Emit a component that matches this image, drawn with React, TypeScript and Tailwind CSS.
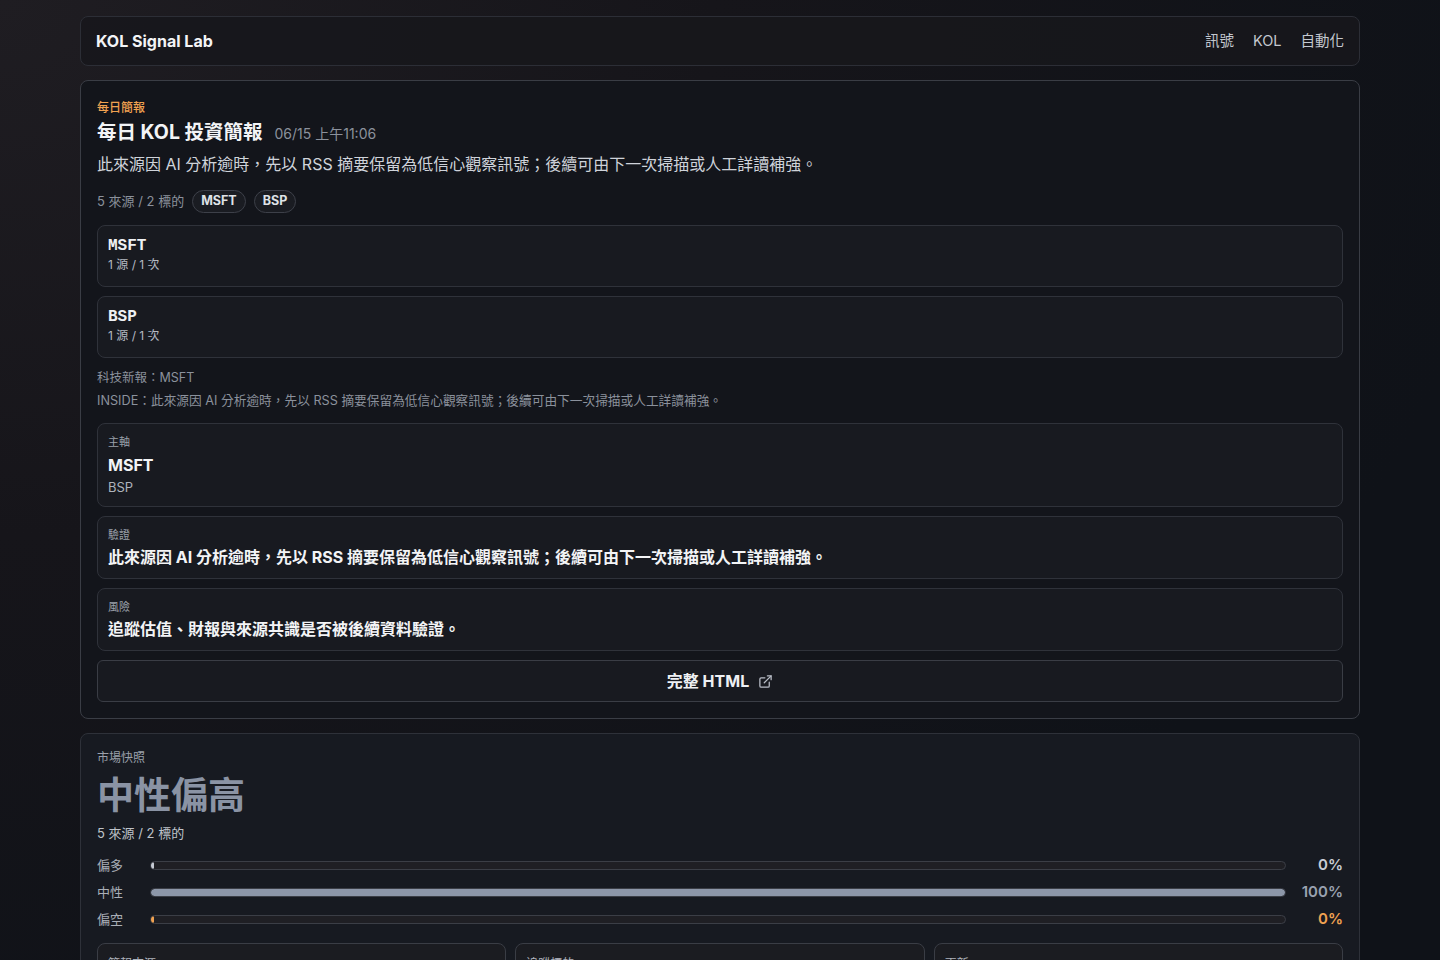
import { ExternalLink } from "lucide-react";

const sans = "font-['Inter','Noto_Sans_CJK_TC',sans-serif]";

type Ticker = { symbol: string; sources: number; mentions: number };
type Bias = { label: string; pct: number; fill: string; text: string };

const tickers: Ticker[] = [
  { symbol: "MSFT", sources: 1, mentions: 1 },
  { symbol: "BSP", sources: 1, mentions: 1 },
];

const biases: Bias[] = [
  { label: "偏多", pct: 0, fill: "bg-[#c5cad3]", text: "text-[#c9cdd5]" },
  { label: "中性", pct: 100, fill: "bg-[#8d97a9]", text: "text-[#9aa2b0]" },
  { label: "偏空", pct: 0, fill: "bg-[#f0a251]", text: "text-[#f0a251]" },
];

const summary =
  "此來源因 AI 分析逾時，先以 RSS 摘要保留為低信心觀察訊號；後續可由下一次掃描或人工詳讀補強。";

function Header() {
  return (
    <header className="flex h-[50px] items-center justify-between rounded-lg border border-[#2c2e36] bg-[#17171c]/90 px-[15px]">
      <span className="text-[16px] font-bold text-[#f3f4f6]">KOL Signal Lab</span>
      <nav className="flex items-center gap-[19px] text-[14.5px] text-[#c4c8cf]">
        <a>訊號</a>
        <a>KOL</a>
        <a>自動化</a>
      </nav>
    </header>
  );
}

function TickerCard({ t }: { t: Ticker }) {
  return (
    <div className="h-[62px] rounded-lg border border-[#2f323a] bg-[#181a20] px-[10px] pt-[10px]">
      <div className="font-['Liberation_Mono',monospace] text-[16px] font-bold leading-[20px] text-[#eef0f3]">
        {t.symbol}
      </div>
      <div className="mt-[1px] text-[12px] leading-[16px] text-[#b4b9c2]">
        {t.sources} 源 / {t.mentions} 次
      </div>
    </div>
  );
}

function Section({ label, children }: { label: string; children: React.ReactNode }) {
  return (
    <div className="rounded-lg border border-[#2f323a] bg-[#181a20] px-[10px] pb-[10px] pt-[11px]">
      <div className="text-[11px] leading-[14px] text-[#9aa0aa]">{label}</div>
      {children}
    </div>
  );
}

function BriefCard() {
  return (
    <section className="mt-[14px] rounded-lg border border-[#3a3d45] bg-[#13151b] px-[16px] pb-[16px] pt-[19px]">
      <div className="text-[12px] font-medium leading-[16px] text-[#f0a251]">每日簡報</div>
      <div className="mt-[3px] flex items-baseline gap-[12px]">
        <h1 className="text-[19.5px] font-bold leading-[26px] text-[#f3f4f6]">每日 KOL 投資簡報</h1>
        <span className="text-[14px] text-[#8b919c]">06/15 上午11:06</span>
      </div>
      <p className="mt-[7px] text-[16px] leading-[24px] text-[#cfd3da]">{summary}</p>
      <div className="mt-[14px] flex items-center gap-[8px]">
        <span className="text-[13px] text-[#8b919c]">5 來源 / 2 標的</span>
        {tickers.map((t) => (
          <span
            key={t.symbol}
            className="flex h-[23px] items-center rounded-full border border-[#3d4049] bg-[#1a1c22] px-[8px] text-[12.5px] font-bold text-[#dfe2e7]"
          >
            {t.symbol}
          </span>
        ))}
      </div>

      <div className="mt-[12px] flex flex-col gap-[9px]">
        {tickers.map((t) => (
          <TickerCard key={t.symbol} t={t} />
        ))}
      </div>

      <div className="mt-[12px] text-[12.5px] leading-[16px] text-[#8b919c]">科技新報：MSFT</div>
      <div className="mt-[7px] text-[12.7px] leading-[16px] text-[#8b919c]">INSIDE：{summary}</div>

      <div className="mt-[14px] flex flex-col gap-[9px]">
        <Section label="主軸">
          <div className="mt-[5px] text-[16px] font-bold leading-[22px] text-[#f3f4f6]">MSFT</div>
          <div className="mt-[2px] text-[13px] leading-[18px] text-[#aeb3bc]">BSP</div>
        </Section>
        <Section label="驗證">
          <div className="mt-[4px] text-[16px] font-bold leading-[22px] text-[#f3f4f6]">{summary}</div>
        </Section>
        <Section label="風險">
          <div className="mt-[4px] text-[16px] font-bold leading-[22px] text-[#f3f4f6]">
            追蹤估值、財報與來源共識是否被後續資料驗證。
          </div>
        </Section>
        <button className="flex h-[42px] items-center justify-center gap-[9px] rounded-md border border-[#3a3d45] bg-[#181a20] text-[16px] font-bold text-[#eef0f3]">
          完整 HTML
          <ExternalLink size={15} strokeWidth={2} className="text-[#b9bec7]" />
        </button>
      </div>
    </section>
  );
}

function BiasRow({ b }: { b: Bias }) {
  return (
    <div className="flex h-[27px] items-center">
      <span className="w-[53px] text-[13px] text-[#a9aeb7]">{b.label}</span>
      <div className="h-[9px] flex-1 overflow-hidden rounded-full border border-[#3b3e46] bg-[#1f1f24]">
        <div className={`h-full rounded-full ${b.fill}`} style={{ width: `max(${b.pct}%, 3px)` }} />
      </div>
      <span className={`w-[57px] text-right text-[15px] font-semibold ${b.text}`}>{b.pct}%</span>
    </div>
  );
}

function StatCard({ label }: { label: string }) {
  return (
    <div className="h-[80px] rounded-lg border border-[#3a3d45] bg-[#1b1c21] px-[10px] pt-[11px]">
      <div className="text-[12px] text-[#aeb3bc]">{label}</div>
    </div>
  );
}

function MarketCard() {
  return (
    <section className="mt-[14px] rounded-lg border border-[#2e3139] bg-[#171a21] px-[16px] pt-[16px] pb-[16px]">
      <div className="text-[12px] leading-[16px] text-[#9aa0aa]">市場快照</div>
      <div className="mt-[7px] text-[37px] font-bold leading-[46px] text-[#8a93a4]">中性偏高</div>
      <div className="mt-[5px] text-[13px] leading-[18px] text-[#bfc3ca]">5 來源 / 2 標的</div>
      <div className="mt-[10px] flex flex-col">
        {biases.map((b) => (
          <BiasRow key={b.label} b={b} />
        ))}
      </div>
      <div className="mt-[10px] grid grid-cols-3 gap-[9px]">
        <StatCard label="簡報來源" />
        <StatCard label="追蹤標的" />
        <StatCard label="更新" />
      </div>
    </section>
  );
}

export default function App() {
  return (
    <div
      className={`${sans} min-h-screen bg-[#0f1218] bg-[radial-gradient(ellipse_at_0%_0%,#1f1d22_0%,#16151a_35%,#0f1218_75%)] pb-[40px] pt-[16px] antialiased`}
    >
      <div className="mx-auto w-[1280px]">
        <Header />
        <BriefCard />
        <MarketCard />
      </div>
    </div>
  );
}
